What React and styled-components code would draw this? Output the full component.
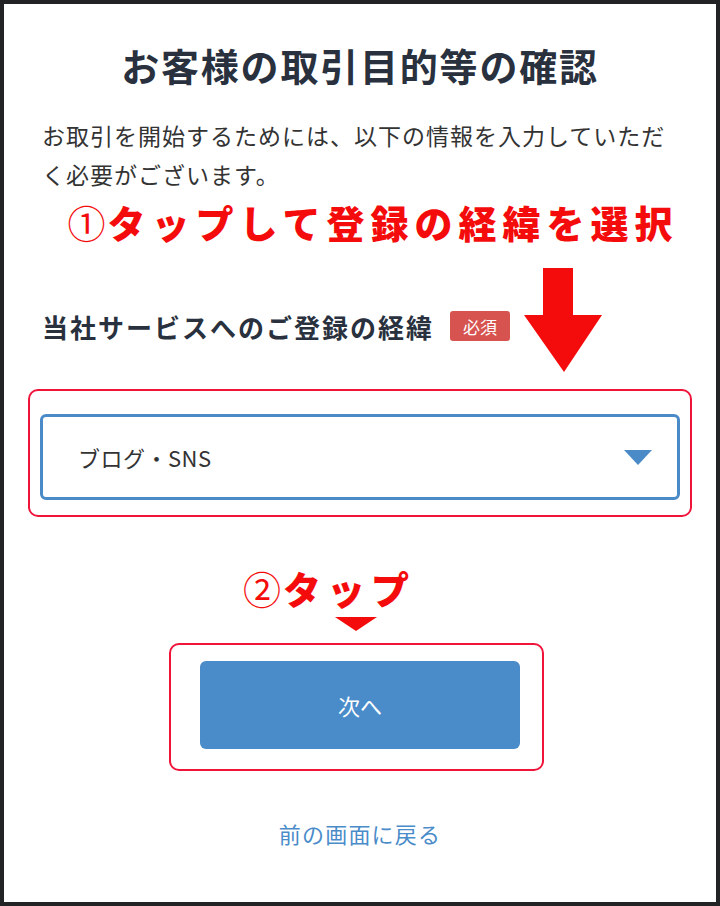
import styled, { createGlobalStyle } from "styled-components";

const GlobalStyle = createGlobalStyle`
    html, body {
        margin: 0;
        padding: 0;
        background: #222;
    }
    * { box-sizing: border-box; }
`;

const Frame = styled.div`
    width: 720px;
    height: 906px;
    border: 4px solid #222325;
    background: #fff;
    padding: 34px 38px 0;
    display: flex;
    flex-direction: column;
    font-family: "Noto Sans CJK JP", "Noto Sans", sans-serif;
    color: #29313e;
`;

const Title = styled.h1`
    margin: 0;
    text-align: center;
    font-size: 38px;
    line-height: 54px;
    letter-spacing: 1.8px;
    font-weight: 700;
`;

const Lead = styled.p`
    margin: 24px 0 0;
    font-size: 23px;
    line-height: 39px;
    letter-spacing: 1px;
    color: #333;
`;

// red hint text laid over the form (annotation)
const Note = styled.div`
    margin: ${p => p.$top}px -30px 0;
    font-size: 38px;
    line-height: 50px;
    font-weight: 900;
    letter-spacing: 6px;
    white-space: nowrap;
    color: #f40c0c;
    text-align: center;
    padding-left: ${p => p.$shift || 0}px;
    padding-right: ${p => p.$shiftRight || 0}px;
`;

const StepNo = styled.span`
    font-weight: 400;
    letter-spacing: 2px;
`;

const FieldRow = styled.div`
    margin-top: 21px;
    display: flex;
    align-items: center;
`;

const Label = styled.div`
    display: flex;
    align-items: center;
    gap: 16px;
    padding-top: 12px;
    font-size: 26px;
    font-weight: 700;
    letter-spacing: 2px;
`;

const Badge = styled.span`
    display: inline-flex;
    align-items: center;
    justify-content: center;
    width: 60px;
    height: 30px;
    border-radius: 3px;
    background: #d6534f;
    color: #fff;
    font-size: 17px;
    font-weight: 400;
    letter-spacing: 0;
`;

const BigArrow = styled.svg`
    margin-left: 14px;
    flex: none;
`;

const Highlight = styled.div`
    border: 2px solid #f0133a;
    border-radius: 10px;
`;

const SelectBox = styled(Highlight)`
    margin: 17px -14px 0;
    padding: 23px 10px 15px;
`;

const Select = styled.div`
    height: 86px;
    border: 3px solid #4a8bc7;
    border-radius: 6px;
    display: flex;
    align-items: center;
    justify-content: space-between;
    padding: 0 25px 0 35px;
    font-size: 22px;
    color: #333;
    letter-spacing: 0.5px;
`;

const Caret = styled.span`
    width: 0;
    height: 0;
    border-left: 14px solid transparent;
    border-right: 14px solid transparent;
    border-top: 15px solid #4a8bc7;
`;

const SmallArrow = styled.div`
    align-self: center;
    margin: 4px 0 0 -8px;
    width: 0;
    height: 0;
    border-left: 21px solid transparent;
    border-right: 21px solid transparent;
    border-top: 14px solid #f40c0c;
`;

const ButtonBox = styled(Highlight)`
    align-self: center;
    margin: 12px 0 0 -7px;
    width: 375px;
    padding: 16px 22px 20px 29px;
`;

const NextButton = styled.button`
    width: 320px;
    height: 88px;
    border: none;
    border-radius: 6px;
    background: #4a8cc9;
    color: #fff;
    font-family: inherit;
    font-size: 22px;
    cursor: pointer;
`;

const BackLink = styled.a`
    margin-top: 44px;
    align-self: center;
    font-size: 22px;
    line-height: 36px;
    color: #4a8cc9;
    text-decoration: none;
    letter-spacing: 1.2px;
`;

const App = () => {
    return (
        <>
            <GlobalStyle />
            <Frame>
                <Title>お客様の取引目的等の確認</Title>
                <Lead>お取引を開始するためには、以下の情報を入力していただく必要がございます。</Lead>
                <Note $top={3} $shift={26}><StepNo>①</StepNo>タップして登録の経緯を選択</Note>
                <FieldRow>
                    <Label>
                        当社サービスへのご登録の経緯
                        <Badge>必須</Badge>
                    </Label>
                    <BigArrow width="78" height="104" viewBox="0 0 78 104">
                        <path d="M19 0 H49 V47 H78 L40 104 L0 47 H19 Z" fill="#f40c0c" />
                    </BigArrow>
                </FieldRow>
                <SelectBox>
                    <Select>
                        ブログ・SNS
                        <Caret />
                    </Select>
                </SelectBox>
                <Note $top={46} $shiftRight={62}><StepNo>②</StepNo>タップ</Note>
                <SmallArrow />
                <ButtonBox>
                    <NextButton>次へ</NextButton>
                </ButtonBox>
                <BackLink href="#">前の画面に戻る</BackLink>
            </Frame>
        </>
    );
};

export default App;
